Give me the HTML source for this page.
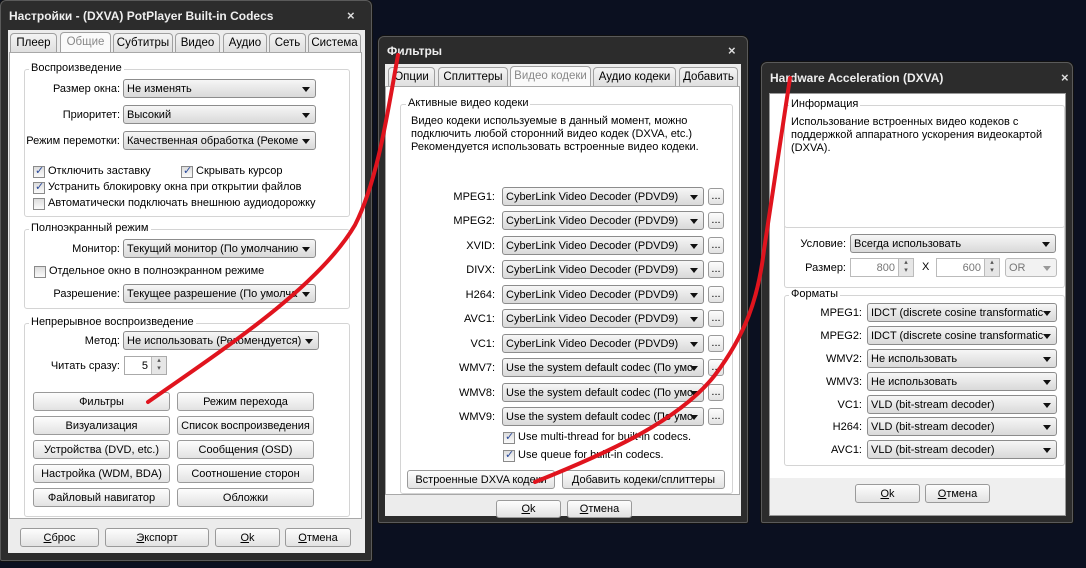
<!DOCTYPE html>
<html><head><meta charset="utf-8">
<style>
*{box-sizing:border-box;margin:0;padding:0}
body{width:1086px;height:568px;background:#0b1020;position:relative;overflow:hidden;font-family:"Liberation Sans","DejaVu Sans",sans-serif;font-size:11px;color:#000}
.a{position:absolute}
.win{position:absolute;background:#2c2c2c;border:1px solid #5a5a5a;border-radius:6px 6px 2px 2px;box-shadow:0 0 0 1px #111}
.tt{position:absolute;color:#eee;font-weight:bold;font-size:12px;white-space:nowrap}
.x{position:absolute;color:#ddd;font-weight:bold;font-size:13px}
.cl{position:absolute;background:#ececec}
.pn{position:absolute;background:#fff;border:1px solid #a8a8a8}
.g{position:absolute;border:1px solid #d4d4d4;border-radius:3px}
.lg{position:absolute;background:#fff;padding:0 2px;white-space:nowrap}
.lb{position:absolute;text-align:right;white-space:nowrap}
.t{position:absolute;white-space:nowrap}
.cb{position:absolute;height:19px;border:1px solid #8c8c8c;border-radius:3px;background:linear-gradient(#f6f6f6,#d9d9d9);padding:3px 0 0 3px;white-space:nowrap;overflow:hidden}
.cb:after{content:"";position:absolute;right:5px;top:7px;border:4px solid transparent;border-top:5px solid #111;border-bottom:0}
.cb.d{color:#777;background:#f2f2f2;border-color:#bbb}
.cb.d:after{border-top-color:#999}
.bt{position:absolute;height:19px;border:1px solid #9a9a9a;border-radius:3px;background:linear-gradient(#fdfdfd,#e2e2e2);text-align:center;padding-top:3px;white-space:nowrap;overflow:hidden}
.ch{position:absolute;width:12px;height:12px;border:1px solid #8a8a8a;background:linear-gradient(#ddd,#fafafa)}
.ch.on:after{content:"✓";position:absolute;left:1px;top:-3px;font-size:11px;font-weight:bold;color:#2a4a9a}
.tb{position:absolute;height:20px;border:1px solid #a0a0a0;border-bottom:none;border-radius:4px 4px 0 0;background:linear-gradient(#f4f4f4,#dedede);text-align:center;padding-top:3px;white-space:nowrap;font-size:11.5px}
.tb.s{background:#fafafa;color:#888;height:21px}
.sep{position:absolute;height:1px;background:#bdbdbd;border-bottom:1px solid #fff}
.sp{position:absolute;height:19px;border:1px solid #aaa;background:#fff;text-align:right;padding:3px 18px 0 0}
.sp:after{content:"▴\A▾";white-space:pre;position:absolute;right:0;top:0;width:14px;height:17px;background:#e6e6e6;border-left:1px solid #bbb;font-size:7px;line-height:8px;text-align:center;color:#555}
u{text-decoration:underline}
</style></head><body>

<!-- Window 1 -->
<div class="win" style="left:0;top:0;width:372px;height:561px"></div>
<div class="tt" style="left:9px;top:9px">Настройки - (DXVA) PotPlayer Built-in Codecs</div>
<div class="x" style="left:347px;top:8px">×</div>
<div class="cl" style="left:8px;top:30px;width:357px;height:523px"></div>
<div class="tb" style="left:10px;top:33px;width:47px">Плеер</div>
<div class="tb s" style="left:60px;top:32px;width:51px">Общие</div>
<div class="tb" style="left:113px;top:33px;width:60px">Субтитры</div>
<div class="tb" style="left:175px;top:33px;width:45px">Видео</div>
<div class="tb" style="left:223px;top:33px;width:44px">Аудио</div>
<div class="tb" style="left:269px;top:33px;width:37px">Сеть</div>
<div class="tb" style="left:308px;top:33px;width:53px">Система</div>
<div class="pn" style="left:9px;top:52px;width:353px;height:467px"></div>

<div class="g" style="left:24px;top:69px;width:326px;height:148px"></div>
<div class="lg" style="left:29px;top:62px">Воспроизведение</div>
<div class="lb" style="left:20px;width:100px;top:83px">Размер окна:</div>
<div class="cb" style="left:123px;top:79px;width:193px">Не изменять</div>
<div class="lb" style="left:20px;width:100px;top:109px">Приоритет:</div>
<div class="cb" style="left:123px;top:105px;width:193px">Высокий</div>
<div class="lb" style="left:20px;width:100px;top:135px">Режим перемотки:</div>
<div class="cb" style="left:123px;top:131px;width:193px">Качественная обработка (Рекоме</div>
<div class="sep" style="left:29px;top:156px;width:288px"></div>
<div class="ch on" style="left:33px;top:166px"></div><div class="t" style="left:48px;top:165px">Отключить заставку</div>
<div class="ch on" style="left:181px;top:166px"></div><div class="t" style="left:196px;top:165px">Скрывать курсор</div>
<div class="ch on" style="left:33px;top:182px"></div><div class="t" style="left:48px;top:181px">Устранить блокировку окна при открытии файлов</div>
<div class="ch" style="left:33px;top:198px"></div><div class="t" style="left:48px;top:197px">Автоматически подключать внешнюю аудиодорожку</div>

<div class="g" style="left:24px;top:229px;width:326px;height:80px"></div>
<div class="lg" style="left:29px;top:222px">Полноэкранный режим</div>
<div class="lb" style="left:20px;width:100px;top:243px">Монитор:</div>
<div class="cb" style="left:123px;top:239px;width:193px">Текущий монитор (По умолчанию</div>
<div class="ch" style="left:34px;top:266px"></div><div class="t" style="left:49px;top:265px">Отдельное окно в полноэкранном режиме</div>
<div class="lb" style="left:20px;width:100px;top:288px">Разрешение:</div>
<div class="cb" style="left:123px;top:284px;width:193px">Текущее разрешение (По умолча</div>

<div class="g" style="left:24px;top:323px;width:326px;height:194px"></div>
<div class="lg" style="left:29px;top:316px">Непрерывное воспроизведение</div>
<div class="lb" style="left:20px;width:100px;top:335px">Метод:</div>
<div class="cb" style="left:123px;top:331px;width:196px">Не использовать (Рекомендуется)</div>
<div class="lb" style="left:20px;width:100px;top:360px">Читать сразу:</div>
<div class="sp" style="left:124px;top:356px;width:43px">5</div>
<div class="sep" style="left:29px;top:382px;width:288px"></div>
<div class="bt" style="left:33px;top:392px;width:137px">Фильтры</div>
<div class="bt" style="left:177px;top:392px;width:137px">Режим перехода</div>
<div class="bt" style="left:33px;top:416px;width:137px">Визуализация</div>
<div class="bt" style="left:177px;top:416px;width:137px">Список воспроизведения</div>
<div class="bt" style="left:33px;top:440px;width:137px">Устройства (DVD, etc.)</div>
<div class="bt" style="left:177px;top:440px;width:137px">Сообщения (OSD)</div>
<div class="bt" style="left:33px;top:464px;width:137px">Настройка (WDM, BDA)</div>
<div class="bt" style="left:177px;top:464px;width:137px">Соотношение сторон</div>
<div class="bt" style="left:33px;top:488px;width:137px">Файловый навигатор</div>
<div class="bt" style="left:177px;top:488px;width:137px">Обложки</div>

<div class="bt" style="left:20px;top:528px;width:79px"><u>С</u>брос</div>
<div class="bt" style="left:105px;top:528px;width:104px"><u>Э</u>кспорт</div>
<div class="bt" style="left:215px;top:528px;width:65px"><u>O</u>k</div>
<div class="bt" style="left:285px;top:528px;width:66px"><u>О</u>тмена</div>

<!-- Window 2 -->
<div class="win" style="left:378px;top:36px;width:370px;height:487px"></div>
<div class="tt" style="left:387px;top:44px">Фильтры</div>
<div class="x" style="left:728px;top:43px">×</div>
<div class="cl" style="left:385px;top:64px;width:356px;height:452px"></div>
<div class="tb" style="left:388px;top:67px;width:47px">Опции</div>
<div class="tb" style="left:438px;top:67px;width:70px">Сплиттеры</div>
<div class="tb s" style="left:510px;top:66px;width:81px">Видео кодеки</div>
<div class="tb" style="left:593px;top:67px;width:83px">Аудио кодеки</div>
<div class="tb" style="left:679px;top:67px;width:59px">Добавить</div>
<div class="pn" style="left:385px;top:86px;width:355px;height:409px"></div>
<div class="g" style="left:400px;top:104px;width:333px;height:390px"></div>
<div class="lg" style="left:406px;top:97px">Активные видео кодеки</div>
<div class="t" style="left:411px;top:115px;line-height:13px">Видео кодеки используемые в данный момент, можно<br>подключить любой сторонний видео кодек (DXVA, etc.)<br>Рекомендуется использовать встроенные видео кодеки.</div>

<div class="lb" style="left:440px;width:55px;top:191px">MPEG1:</div><div class="cb" style="left:502px;top:187px;width:202px">CyberLink Video Decoder (PDVD9)</div><div class="bt" style="left:708px;top:188px;width:16px;height:17px;padding-top:1px">...</div>
<div class="lb" style="left:440px;width:55px;top:215px">MPEG2:</div><div class="cb" style="left:502px;top:211px;width:202px">CyberLink Video Decoder (PDVD9)</div><div class="bt" style="left:708px;top:212px;width:16px;height:17px;padding-top:1px">...</div>
<div class="lb" style="left:440px;width:55px;top:240px">XVID:</div><div class="cb" style="left:502px;top:236px;width:202px">CyberLink Video Decoder (PDVD9)</div><div class="bt" style="left:708px;top:237px;width:16px;height:17px;padding-top:1px">...</div>
<div class="lb" style="left:440px;width:55px;top:264px">DIVX:</div><div class="cb" style="left:502px;top:260px;width:202px">CyberLink Video Decoder (PDVD9)</div><div class="bt" style="left:708px;top:261px;width:16px;height:17px;padding-top:1px">...</div>
<div class="lb" style="left:440px;width:55px;top:289px">H264:</div><div class="cb" style="left:502px;top:285px;width:202px">CyberLink Video Decoder (PDVD9)</div><div class="bt" style="left:708px;top:286px;width:16px;height:17px;padding-top:1px">...</div>
<div class="lb" style="left:440px;width:55px;top:313px">AVC1:</div><div class="cb" style="left:502px;top:309px;width:202px">CyberLink Video Decoder (PDVD9)</div><div class="bt" style="left:708px;top:310px;width:16px;height:17px;padding-top:1px">...</div>
<div class="lb" style="left:440px;width:55px;top:338px">VC1:</div><div class="cb" style="left:502px;top:334px;width:202px">CyberLink Video Decoder (PDVD9)</div><div class="bt" style="left:708px;top:335px;width:16px;height:17px;padding-top:1px">...</div>
<div class="lb" style="left:440px;width:55px;top:362px">WMV7:</div><div class="cb" style="left:502px;top:358px;width:202px">Use the system default codec (По умо</div><div class="bt" style="left:708px;top:359px;width:16px;height:17px;padding-top:1px">...</div>
<div class="lb" style="left:440px;width:55px;top:387px">WMV8:</div><div class="cb" style="left:502px;top:383px;width:202px">Use the system default codec (По умо</div><div class="bt" style="left:708px;top:384px;width:16px;height:17px;padding-top:1px">...</div>
<div class="lb" style="left:440px;width:55px;top:411px">WMV9:</div><div class="cb" style="left:502px;top:407px;width:202px">Use the system default codec (По умо</div><div class="bt" style="left:708px;top:408px;width:16px;height:17px;padding-top:1px">...</div>
<div class="ch on" style="left:503px;top:432px"></div><div class="t" style="left:518px;top:431px">Use multi-thread for built-in codecs.</div>
<div class="ch on" style="left:503px;top:450px"></div><div class="t" style="left:518px;top:449px">Use queue for built-in codecs.</div>
<div class="bt" style="left:407px;top:470px;width:148px">Встроенные DXVA кодеки</div>
<div class="bt" style="left:562px;top:470px;width:163px">Добавить кодеки/сплиттеры</div>
<div class="bt" style="left:496px;top:500px;width:65px;height:18px;padding-top:2px"><u>O</u>k</div>
<div class="bt" style="left:567px;top:500px;width:65px;height:18px;padding-top:2px"><u>О</u>тмена</div>

<!-- Window 3 -->
<div class="win" style="left:761px;top:62px;width:312px;height:461px"></div>
<div class="tt" style="left:770px;top:71px">Hardware Acceleration (DXVA)</div>
<div class="x" style="left:1061px;top:70px">×</div>
<div class="pn" style="left:769px;top:93px;width:297px;height:423px;border-color:#999"></div>
<div class="cl" style="left:770px;top:478px;width:295px;height:37px;background:#efefef"></div>
<div class="g" style="left:784px;top:105px;width:281px;height:123px"></div>
<div class="lg" style="left:789px;top:98px">Информация</div>
<div class="t" style="left:791px;top:116px;line-height:13px">Использование встроенных видео кодеков с<br>поддержкой аппаратного ускорения видеокартой<br>(DXVA).</div>
<div class="g" style="left:784px;top:226px;width:281px;height:62px;border-top:none;border-radius:0 0 3px 3px"></div>
<div class="lb" style="left:790px;width:56px;top:238px">Условие:</div>
<div class="cb" style="left:850px;top:234px;width:206px">Всегда использовать</div>
<div class="lb" style="left:790px;width:56px;top:262px">Размер:</div>
<div class="sp" style="left:850px;top:258px;width:64px;color:#777;border-color:#bbb">800</div>
<div class="t" style="left:922px;top:261px">X</div>
<div class="sp" style="left:936px;top:258px;width:64px;color:#777;border-color:#bbb">600</div>
<div class="cb d" style="left:1005px;top:258px;width:52px">OR</div>

<div class="g" style="left:784px;top:295px;width:281px;height:171px"></div>
<div class="lg" style="left:789px;top:288px">Форматы</div>
<div class="lb" style="left:800px;width:62px;top:307px">MPEG1:</div><div class="cb" style="left:867px;top:303px;width:190px">IDCT (discrete cosine transformatic</div>
<div class="lb" style="left:800px;width:62px;top:330px">MPEG2:</div><div class="cb" style="left:867px;top:326px;width:190px">IDCT (discrete cosine transformatic</div>
<div class="lb" style="left:800px;width:62px;top:353px">WMV2:</div><div class="cb" style="left:867px;top:349px;width:190px">Не использовать</div>
<div class="lb" style="left:800px;width:62px;top:376px">WMV3:</div><div class="cb" style="left:867px;top:372px;width:190px">Не использовать</div>
<div class="lb" style="left:800px;width:62px;top:399px">VC1:</div><div class="cb" style="left:867px;top:395px;width:190px">VLD (bit-stream decoder)</div>
<div class="lb" style="left:800px;width:62px;top:421px">H264:</div><div class="cb" style="left:867px;top:417px;width:190px">VLD (bit-stream decoder)</div>
<div class="lb" style="left:800px;width:62px;top:444px">AVC1:</div><div class="cb" style="left:867px;top:440px;width:190px">VLD (bit-stream decoder)</div>
<div class="bt" style="left:855px;top:484px;width:65px"><u>O</u>k</div>
<div class="bt" style="left:925px;top:484px;width:65px"><u>О</u>тмена</div>

<svg class="a" style="left:0;top:0" width="1086" height="568">
<path d="M148,402 C230,345 320,285 355,225 C378,180 388,110 398,55" fill="none" stroke="#e0141e" stroke-width="4" stroke-linecap="round"/>
<path d="M535,482 C610,452 680,420 715,375 C745,335 758,300 764,250 L790,78" fill="none" stroke="#e0141e" stroke-width="4" stroke-linecap="round"/>
</svg>
</body></html>
